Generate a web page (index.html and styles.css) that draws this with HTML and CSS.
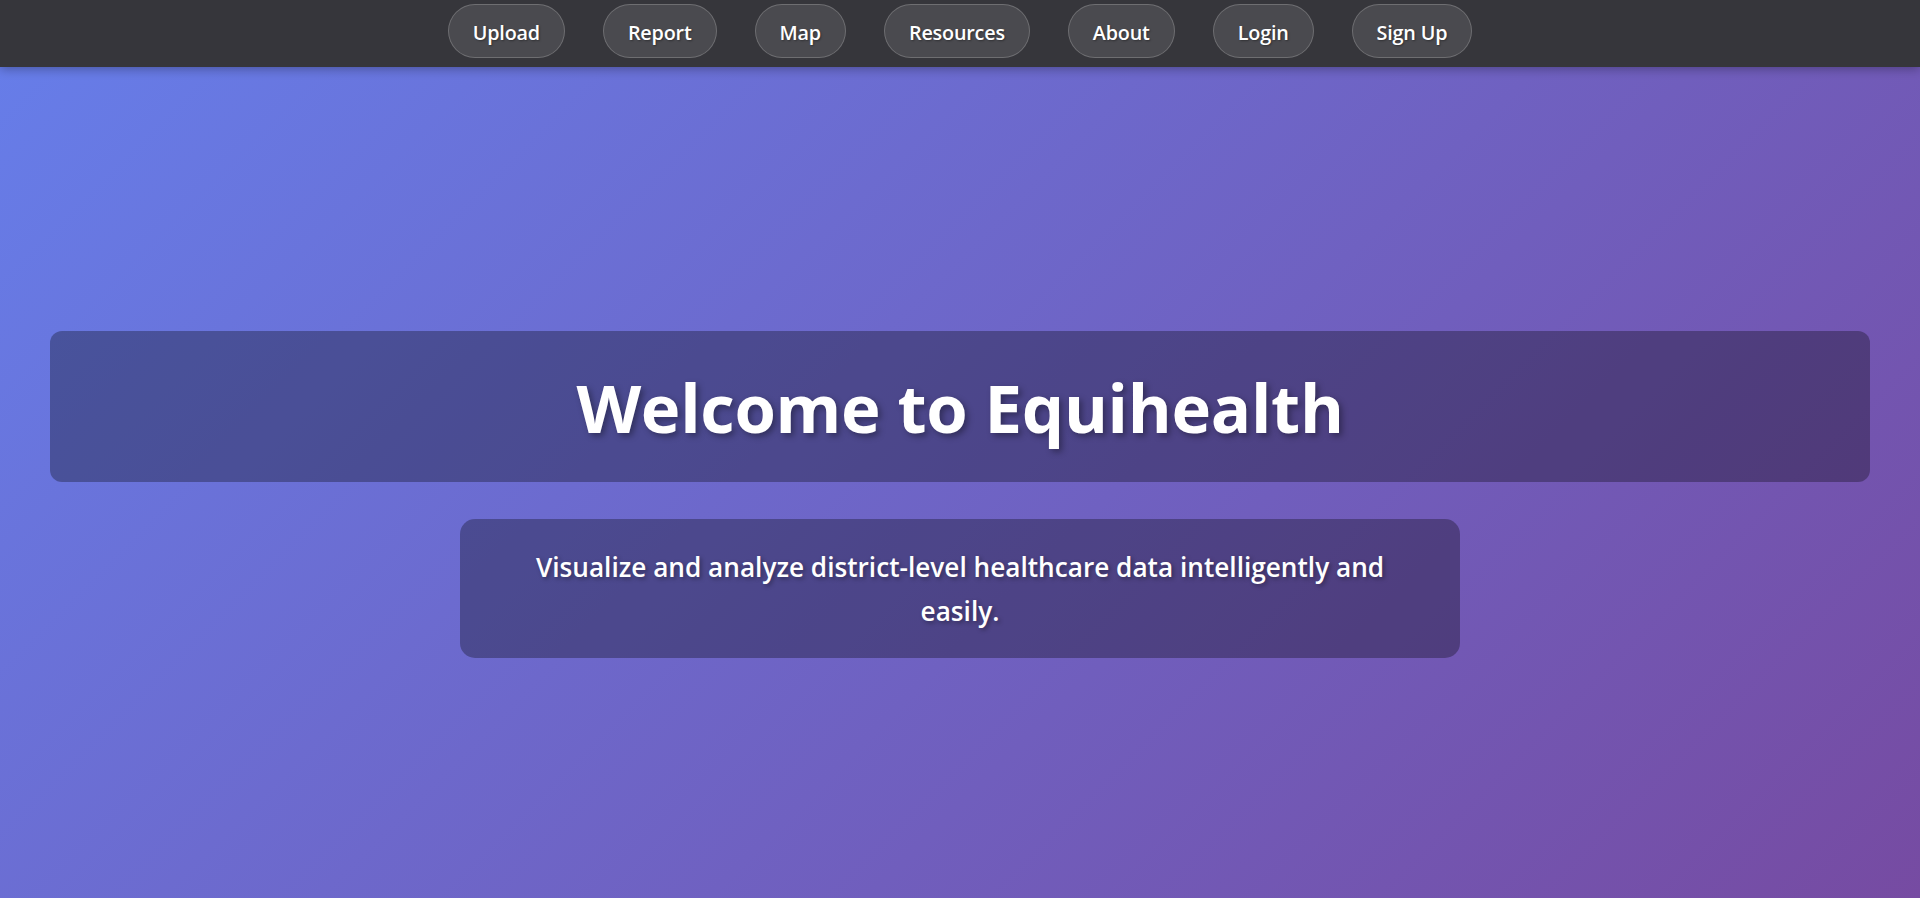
FILE: index.html
```html
<!DOCTYPE html>
<html lang="en">
<head>
<meta charset="utf-8">
<title>Equihealth</title>
<link rel="stylesheet" href="styles.css">
</head>
<body>
<nav class="topnav">
  <a class="nav-btn" href="#">Upload</a>
  <a class="nav-btn" href="#">Report</a>
  <a class="nav-btn" href="#">Map</a>
  <a class="nav-btn" href="#">Resources</a>
  <a class="nav-btn" href="#">About</a>
  <a class="nav-btn" href="#">Login</a>
  <a class="nav-btn" href="#">Sign Up</a>
</nav>
<main class="hero">
  <h1 class="hero-title">Welcome to Equihealth</h1>
  <p class="hero-sub">Visualize and analyze district-level healthcare data intelligently and easily.</p>
</main>
</body>
</html>
```

FILE: styles.css
```css
* { box-sizing: border-box; }
html, body {
  margin: 0;
  padding: 0;
  height: 100%;
}
body {
  font-family: "Open Sans", "Noto Sans", "Liberation Sans", sans-serif;
  background: linear-gradient(135deg, #667eea 0%, #764ba2 100%);
  color: #fff;
  overflow: hidden;
}
.topnav {
  position: relative;
  z-index: 2;
  height: 67px;
  background: #36363b;
  display: flex;
  justify-content: center;
  align-items: flex-start;
  gap: 38px;
  padding-top: 4px;
  box-shadow: 0 2px 10px rgba(0, 0, 0, 0.3);
}
.nav-btn {
  display: inline-flex;
  align-items: center;
  justify-content: center;
  height: 54px;
  padding: 2px 24px 0;
  border-radius: 30px;
  background: rgba(255, 255, 255, 0.1);
  border: 1px solid rgba(255, 255, 255, 0.2);
  color: #fff;
  text-decoration: none;
  font-size: 19.8px;
  font-weight: 600;
  text-shadow: 1px 1px 2px rgba(0, 0, 0, 0.35);
  letter-spacing: -0.2px;
}
.hero {
  display: flex;
  flex-direction: column;
  align-items: center;
  padding: 264px 50px 0;
}
.hero-title {
  width: 100%;
  margin: 0;
  padding: 36px 0 35px;
  text-align: center;
  font-size: 67px;
  line-height: 1.2;
  font-weight: 700;
  letter-spacing: -0.3px;
  background: rgba(0, 0, 0, 0.3);
  border-radius: 12px;
  text-shadow: 3px 3px 6px rgba(0, 0, 0, 0.35);
}
.hero-sub {
  width: 1000px;
  margin: 37px 0 0;
  padding: 26px 56px 25px;
  text-align: center;
  font-size: 26.2px;
  line-height: 44px;
  font-weight: 600;
  background: rgba(0, 0, 0, 0.3);
  border-radius: 15px;
  text-shadow: 2px 2px 4px rgba(0, 0, 0, 0.35);
}
```
